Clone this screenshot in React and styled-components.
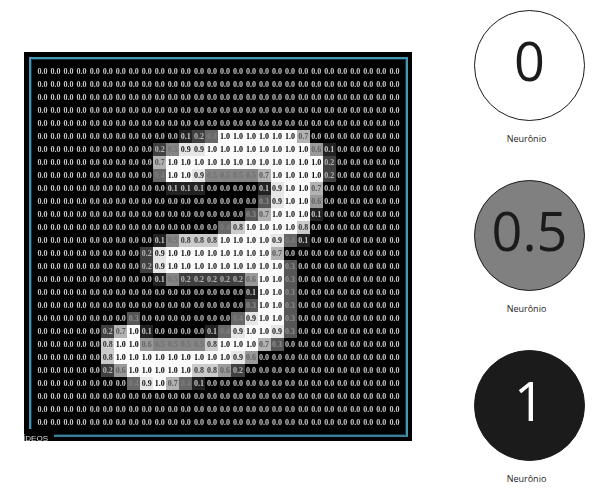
import React from "react";
import styled, { createGlobalStyle } from "styled-components";

const SIZE = 28;

// Each stroke row: [row, first column, tenths of activation...]
const STROKES = [
  [5, 11, 1, 2, 4, 10, 10, 10, 10, 10, 10, 7],
  [6, 9, 2, 5, 9, 9, 10, 10, 10, 10, 10, 10, 10, 10, 6, 1],
  [7, 9, 7, 10, 10, 10, 10, 10, 10, 10, 10, 10, 10, 10, 10, 2],
  [8, 9, 4, 10, 10, 9, 5, 5, 5, 5, 7, 10, 10, 10, 10, 2],
  [9, 10, 1, 1, 1, 0, 0, 0, 0, 1, 9, 10, 10, 7],
  [10, 17, 3, 9, 10, 10, 6],
  [11, 16, 3, 7, 10, 10, 10, 1],
  [12, 14, 4, 8, 10, 10, 10, 10, 8],
  [13, 9, 1, 5, 8, 8, 8, 10, 10, 10, 10, 9, 4, 1],
  [14, 8, 2, 9, 10, 10, 10, 10, 10, 10, 10, 10, 7],
  [15, 8, 2, 9, 10, 10, 10, 10, 10, 10, 10, 10, 10, 3],
  [16, 9, 1, 5, 2, 2, 2, 2, 2, 6, 10, 10, 3],
  [17, 16, 1, 10, 10, 3],
  [18, 16, 3, 10, 10, 3],
  [19, 7, 3, 0, 0, 0, 0, 0, 0, 0, 4, 9, 10, 10, 3],
  [20, 5, 2, 7, 10, 1, 0, 0, 0, 0, 1, 4, 9, 10, 10, 9, 3],
  [21, 5, 8, 10, 10, 6, 5, 5, 5, 5, 8, 10, 10, 10, 7, 3],
  [22, 5, 8, 10, 10, 10, 10, 10, 10, 10, 10, 10, 9, 6],
  [23, 5, 2, 6, 10, 10, 10, 10, 10, 8, 8, 6, 2],
  [24, 7, 4, 9, 10, 7, 4, 1],
];

const matrix = Array.from({ length: SIZE }, () => Array(SIZE).fill(0));
STROKES.forEach(([row, start, ...values]) => {
  values.forEach((value, i) => {
    matrix[row][start + i] = value;
  });
});

const FILLS = ["#000", "#222", "#404040", "#565656", "#686868", "#858585", "#999", "#b2b2b2", "#cbcbcb", "#e6e6e6", "#fafafa"];
const INKS = ["#c8c8c8", "#c8c8c8", "#b4b4b4", "#8f8f8f", "#7d7d7d", "#707070", "#626262", "#555", "#333", "#181818", "#000"];

const GlobalStyle = createGlobalStyle`
  *, *::before, *::after { box-sizing: border-box; }
  body { margin: 0; background: #fff; }
`;

const Page = styled.main`
  display: grid;
  grid-template-columns: minmax(0, 1fr) 111px;
  column-gap: 62px;
  padding: 10px 22px 10px 24px;
  font-family: "Open Sans", "Noto Sans", sans-serif;
  color: #1b1b1b;
`;

const Board = styled.section`
  position: relative;
  align-self: start;
  margin-top: 42px;
  padding: 5px 4px 4px 5px;
  background: #000;
  overflow: hidden;
`;

const Frame = styled.div`
  padding: 6px 5px;
  border: 2px solid #4496b2;
  border-bottom-color: #3a7f98;
  box-shadow: inset 0 0 0 1px #123542;
`;

const Matrix = styled.table`
  width: 100%;
  table-layout: fixed;
  border-collapse: collapse;
  font-family: "Liberation Serif", serif;
  font-size: 8px;
  font-weight: 700;
  line-height: 13px;
  will-change: transform;
`;

const Cell = styled.td`
  height: 13px;
  padding: 0;
  text-align: center;
  white-space: nowrap;
  background: ${({ $level }) => FILLS[$level]};
  color: ${({ $level }) => INKS[$level]};
`;

const CornerTag = styled.span`
  position: absolute;
  left: 0;
  bottom: 0;
  width: 30px;
  height: 12px;
  padding-right: 6px;
  display: flex;
  justify-content: flex-end;
  overflow: hidden;
  background: #000;
  color: #ddd;
  font: 8px/20px "Liberation Sans", sans-serif;
  will-change: transform;
`;

const Neurons = styled.aside`
  display: flex;
  flex-direction: column;
  gap: 34px;
`;

const Figure = styled.figure`
  margin: 0;
  text-align: center;
`;

const TONES = {
  off: { fill: "#fff", ink: "#1b1b1b" },
  half: { fill: "#808080", ink: "#1b1b1b" },
  on: { fill: "#1b1b1b", ink: "#fff" },
};

const Circle = styled.div`
  height: 111px;
  padding-bottom: 12px;
  display: flex;
  align-items: center;
  justify-content: center;
  border: 1px solid #1b1b1b;
  border-radius: 50%;
  background: ${({ $tone }) => TONES[$tone].fill};
  color: ${({ $tone }) => TONES[$tone].ink};
  font-size: 54px;
  line-height: 1;
`;

const Caption = styled.figcaption`
  margin-top: 11px;
  padding-right: 6px;
  font-size: 9px;
  line-height: 14px;
`;

function Neuron({ value, tone }) {
  return (
    <Figure>
      <Circle $tone={tone}>{value}</Circle>
      <Caption>Neurônio</Caption>
    </Figure>
  );
}

export default function App() {
  return (
    <>
      <GlobalStyle />
      <Page>
        <Board>
          <Frame>
            <Matrix>
              <tbody>
                {matrix.map((row, y) => (
                  <tr key={y}>
                    {row.map((level, x) => (
                      <Cell key={x} $level={level}>
                        {(level / 10).toFixed(1)}
                      </Cell>
                    ))}
                  </tr>
                ))}
              </tbody>
            </Matrix>
          </Frame>
          <CornerTag>VÍDEOS</CornerTag>
        </Board>
        <Neurons>
          <Neuron value="0" tone="off" />
          <Neuron value="0.5" tone="half" />
          <Neuron value="1" tone="on" />
        </Neurons>
      </Page>
    </>
  );
}
